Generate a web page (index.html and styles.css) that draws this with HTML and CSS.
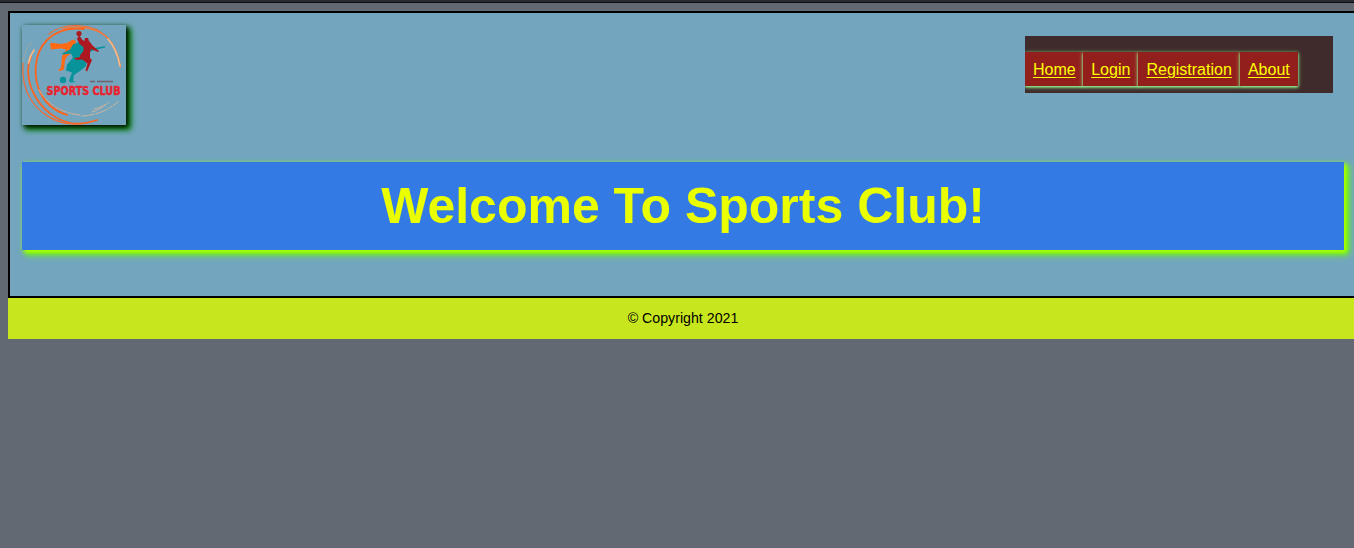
FILE: index.html
```html
<!DOCTYPE html>
<html lang="en">
<head>
<meta charset="utf-8">
<title>Sports Club</title>
<link rel="stylesheet" href="styles.css">
</head>
<body>
<div class="topline"></div>
<div class="page">
  <main class="main">
    <header class="header">
      <svg class="logo" viewBox="0 0 104 100" role="img" aria-label="Sports Club logo">
        <g fill="none" stroke-linecap="round">
          <path d="M27 9C36 2 48 0 58 .7C70 1 79 6 86 13" stroke="#f06b32" stroke-width="1.1"/>
          <path d="M40 4C53 0 68 2 79 8C91 15 96 27 98.500 42" stroke="#f47a3a" stroke-width="1.3"/>
          <path d="M86 14C93 22 96 30 98 41" stroke="#f7b98a" stroke-width="1.6"/>
          <path d="M62 4C46 2 34 6 25 15C11 29 11 54 19 69C24 79 33 86 45 90" stroke="#ff641f" stroke-width="1.8"/>
          <path d="M9 32C4 43 6 58 12 69C20 85 34 94 45 97C54 100 66 98 75 95" stroke="#fb6422" stroke-width="1.8"/>
          <path d="M1 38C0 52 2 63 8 73C16 87 32 98 50 99C58 100 66 98 72 96" stroke="#f26a34" stroke-width="1.2"/>
          <path d="M12 25C9 29 7.500 33 6.500 38" stroke="#ffb880" stroke-width="1.6"/>
          <path d="M9 18C5 23 2 29 1 38" stroke="#b0a698" stroke-width=".7" stroke-dasharray="5 2"/>
          <path d="M17 65C26 80 40 88 58 90" stroke="#d8ad94" stroke-width="1" stroke-dasharray="8 2 3 1"/>
          <path d="M70 87Q80 84 87 77M60 91Q81 90 97 76M72 84Q78 83 84 79" stroke="#ccb5a0" stroke-width="1" stroke-dasharray="4 1 7 2"/>
        </g>
        <path fill="#ff6a17" d="M28 18.500l2-.800 9 1.200 7-1.400 3-2 3-1 2 2-1 4 2 2-5 5-5 4-2 4-1 9-4 1.500-2-.500 3-3 1-11 4-7-5-1-10 1z"/>
        <path fill="#069399" d="M55 18l3-2 3 1 1 4 3 3 8-1 10-2v1.500l-10 2.500-6 2-2 7-1 7-6 5-6 4-1 6 3 1-6 .500-1-2 3-8-6-2 1-6 6-7-2-4-8 1-1-1 8-4 3-5z"/>
        <circle cx="41" cy="55" r="3.200" fill="#069399"/>
        <circle cx="57" cy="8.500" r="2.600" fill="#ad1720"/>
        <path fill="#ad1720" d="M57 10l3.500 5 2 1 .5-3 3 0 1 3 4 5 6 5-1 1-7-3-1 4 0 5 2 2-3 7-2 4.500-1.500-1 2-7-5-4-6 .500-2.500-2 6.500-1-1-1 4-5 0-4-4-3-2.500-5z"/>
        <path d="M68 56.500h5M75 56.500h16" stroke="#74606b" stroke-width="1.400"/>
        <text class="logo-text" x="24.500" y="69.500" textLength="74" lengthAdjust="spacingAndGlyphs">SPORTS CLUB</text>
      </svg>
      <nav class="nav">
        <a href="#">Home</a><a href="#">Login</a><a href="#">Registration</a><a href="#">About</a>
      </nav>
    </header>
    <h1 class="title">Welcome To Sports Club!</h1>
  </main>
  <footer class="footer">© Copyright 2021</footer>
</div>
</body>
</html>
```
FILE: styles.css
```css
html {
  overflow: hidden;
}

body {
  margin: 0;
  background: #636973;
  font-family: "Liberation Sans", Arial, sans-serif;
  font-size: 16px;
}

.topline {
  height: 2px;
  background: #2b2a33;
  border-bottom: 1px solid #0c0c0d;
}

.page {
  width: 1350px;
  margin: 8px 0 0 8px;
}

.main {
  box-sizing: border-box;
  height: 287px;
  padding: 12px;
  border: 2px solid #000;
  background: #73a6be;
}

.header {
  display: flex;
  justify-content: space-between;
  height: 137px;
}

.logo {
  width: 104px;
  height: 100px;
  background: #73a6be;
  box-shadow: 2px 2px 5px #000, 4px 4px 6px 1px green;
  overflow: visible;
}

.logo-text {
  fill: #e8222f;
  stroke: #e8222f;
  stroke-width: .5px;
  font: bold 12px "DejaVu Sans", sans-serif;
}

.nav {
  box-sizing: border-box;
  display: flex;
  width: 308px;
  height: 57px;
  margin: 11px 11px 0 0;
  padding: 16px 0 7px;
  background: #3f2b2b;
  overflow: hidden;
}

.nav a {
  height: 17px;
  padding: 9px 8px 8px;
  color: #ff0;
  background: #931f1c;
  line-height: 18px;
  text-underline-offset: 2px;
  text-decoration-thickness: 1px;
  box-shadow: 0 1px 2px lightgreen, 0 1px 4px lightgreen;
}

.nav a + a {
  margin-left: -.5px;
  padding-right: 8.6px;
}

.title {
  height: 88px;
  margin: 0;
  background: #337ae5;
  color: #eaff00;
  font-size: 50px;
  line-height: 89px;
  text-align: center;
  box-shadow: 2px 2px 4px #bf0, 4px 4px 6px 1px #6f0;
}

.footer {
  height: 41px;
  background: #c8e61e;
  color: #000;
  font-size: 14.2px;
  line-height: 41px;
  text-align: center;
}
```
